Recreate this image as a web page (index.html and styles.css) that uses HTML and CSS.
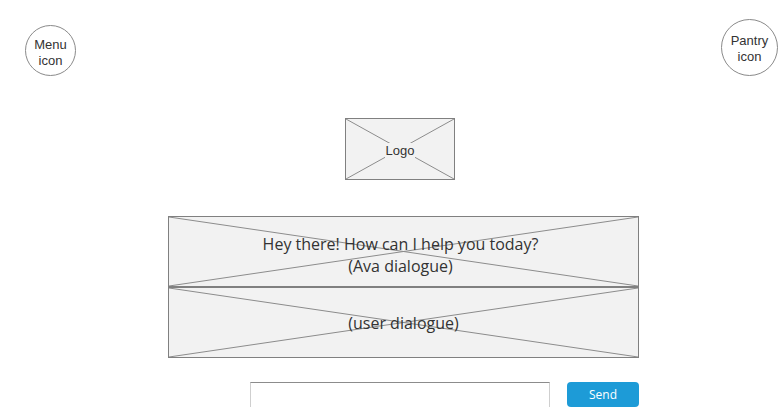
FILE: index.html
```html
<!DOCTYPE html>
<html>
<head>
<meta charset="utf-8">
<link rel="stylesheet" href="styles.css">
</head>
<body>
<div class="page">
  <header class="header">
    <div class="circle menu">Menu<br>icon</div>
    <div class="circle pantry">Pantry<br>icon</div>
  </header>
  <div class="logo">
    <svg class="cross" viewBox="0 0 100 100" preserveAspectRatio="none"><line x1="0" y1="0" x2="100" y2="100"/><line x1="100" y1="0" x2="0" y2="100"/></svg>
    <span class="logo-text">Logo</span>
  </div>
  <div class="dialog">
    <div class="box ava">
      <svg class="cross" viewBox="0 0 100 100" preserveAspectRatio="none"><line x1="0" y1="0" x2="100" y2="100"/><line x1="100" y1="0" x2="0" y2="100"/></svg>
      <p class="msg">Hey there! How can I help you today?<br>(Ava dialogue)</p>
    </div>
    <div class="box user">
      <svg class="cross" viewBox="0 0 100 100" preserveAspectRatio="none"><line x1="0" y1="0" x2="100" y2="100"/><line x1="100" y1="0" x2="0" y2="100"/></svg>
      <p class="msg">(user dialogue)</p>
    </div>
  </div>
  <div class="composer">
    <input class="field" type="text">
    <button class="send">Send</button>
  </div>
</div>
</body>
</html>
```
FILE: styles.css
```css
html, body {
  margin: 0;
  padding: 0;
  background: #ffffff;
}
.page {
  width: 780px;
  height: 407px;
  overflow: hidden;
}
.header {
  display: flex;
  justify-content: space-between;
  align-items: flex-start;
  padding: 0 2px 0 25px;
  height: 118px;
}
.circle {
  box-sizing: border-box;
  border: 1px solid #8a8a8a;
  border-radius: 50%;
  background: #fff;
  display: flex;
  align-items: center;
  justify-content: center;
  text-align: center;
  font-family: "Liberation Sans", Arial, sans-serif;
  font-size: 13px;
  line-height: 16px;
  color: #333;
}
.menu {
  width: 51px;
  height: 51px;
  margin-top: 25px;
  padding-top: 4px;
}
.pantry {
  width: 57px;
  height: 57px;
  margin-top: 19px;
  padding-top: 2px;
}
.cross {
  position: absolute;
  left: 0;
  top: 0;
  width: 100%;
  height: 100%;
}
.cross line {
  stroke: #8c8c8c;
  stroke-width: 1;
  vector-effect: non-scaling-stroke;
}
.logo {
  position: relative;
  box-sizing: border-box;
  width: 110px;
  height: 62px;
  margin-left: 345px;
  padding-top: 2px;
  border: 1px solid #808080;
  background: #f2f2f2;
  display: flex;
  align-items: center;
  justify-content: center;
}
.logo-text {
  position: relative;
  font-family: "Liberation Sans", Arial, sans-serif;
  font-size: 13px;
  color: #333;
  background: #f2f2f2;
  padding: 0 1px;
}
.dialog {
  margin-top: 36px;
  margin-left: 168px;
  width: 471px;
}
.box {
  position: relative;
  box-sizing: border-box;
  height: 71px;
  border: 1px solid #808080;
  background: #f2f2f2;
  display: flex;
  flex-direction: column;
  align-items: center;
}
.box.user {
  justify-content: center;
}
.ava {
  padding-top: 16px;
  padding-right: 6px;
}
.msg {
  position: relative;
  margin: 0;
  text-align: center;
  font-family: "Open Sans", "Noto Sans", sans-serif;
  font-size: 16px;
  line-height: 22px;
  color: #333;
}
.composer {
  display: flex;
  gap: 17px;
  margin-top: 24px;
  margin-left: 250px;
}
.field {
  box-sizing: border-box;
  width: 300px;
  height: 27px;
  margin: 0;
  padding: 0;
  border: 1px solid #cfcfcf;
  border-top: 1px solid #8c8c8c;
  background: #fff;
}
.send {
  box-sizing: border-box;
  width: 72px;
  height: 25px;
  margin: 0;
  border: none;
  border-radius: 4px;
  background: #1d9bd7;
  color: #fff;
  font-family: "Open Sans", "Noto Sans", sans-serif;
  font-size: 12px;
  padding: 0;
}
```
